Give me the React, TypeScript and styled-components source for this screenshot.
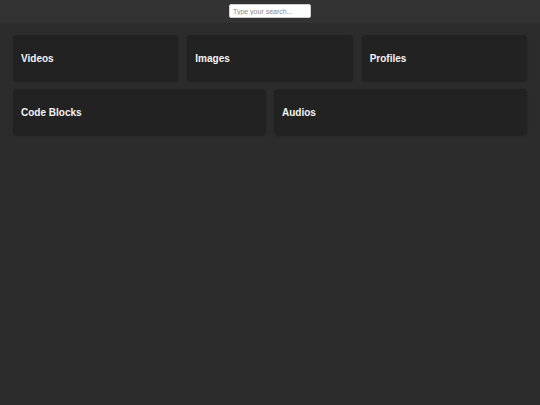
import React from "react";
import styled, { createGlobalStyle } from "styled-components";

const Global = createGlobalStyle`
  html, body { margin: 0; padding: 0; background: #2c2c2c; }
  body { font-family: "Liberation Sans", Arial, sans-serif; }
`;

const Page = styled.div`
  min-height: 405px;
  background: #2c2c2c;
`;

const Header = styled.header`
  height: 23px;
  background: #333333;
  display: flex;
  align-items: flex-start;
  justify-content: center;
  padding-top: 4px;
  box-sizing: border-box;
`;

const Search = styled.input`
  width: 82px;
  height: 14px;
  box-sizing: border-box;
  border: 1px solid #cfcfcf;
  border-radius: 2px;
  background: #ffffff;
  padding: 0 3px;
  font-family: "Liberation Sans", Arial, sans-serif;
  font-size: 7px;
  color: #333;
  outline: none;
  &::placeholder { color: #8a8a8a; }
`;

const Main = styled.main`
  padding: 12px 13px;
  display: flex;
  flex-direction: column;
  gap: 8px;
`;

const Row = styled.div<{ $cols: number }>`
  display: grid;
  grid-template-columns: repeat(${(p) => p.$cols}, 1fr);
  gap: ${(p) => (p.$cols === 3 ? 9 : 8)}px;
`;

const Card = styled.div`
  height: 46px;
  background: #222222;
  border-radius: 4px;
  box-shadow: 0 1px 2px rgba(0, 0, 0, 0.25);
  display: flex;
  align-items: center;
  padding: 0 8px;
  color: #f4f4f4;
  font-weight: bold;
  font-size: 10px;
`;

export default function App() {
  return (
    <Page>
      <Global />
      <Header>
        <Search placeholder="Type your search..." />
      </Header>
      <Main>
        <Row $cols={3}>
          <Card>Videos</Card>
          <Card>Images</Card>
          <Card>Profiles</Card>
        </Row>
        <Row $cols={2}>
          <Card>Code Blocks</Card>
          <Card>Audios</Card>
        </Row>
      </Main>
    </Page>
  );
}
